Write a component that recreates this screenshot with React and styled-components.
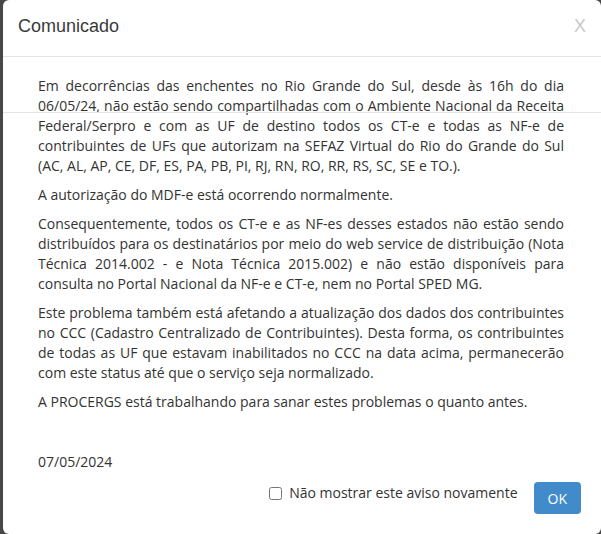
import React from "react";
import styled, { createGlobalStyle } from "styled-components";

const col_text = "#333";
const col_line = "#e5e5e5";
const col_primary = "#428bca";

const GlobalStyle = createGlobalStyle`
    html, body {
        margin: 0;
        padding: 0;
        background: #474747;
    }
    * {
        box-sizing: border-box;
    }
`;

const Backdrop = styled.div`
    display: flex;
    height: 534px;
    padding-left: 3px;
`;

const Dialog = styled.div`
    position: relative;
    display: flex;
    flex-direction: column;
    flex: 1;
    background: #fff;
    border-radius: 6px;
    overflow: hidden;
`;

const Header = styled.div`
    display: flex;
    align-items: center;
    justify-content: space-between;
    height: 57px;
    padding: 0 15px 3px 15px;
    border-bottom: 1px solid ${col_line};
`;

const Title = styled.h4`
    margin: 0;
    font-family: "Liberation Sans", Arial, sans-serif;
    font-weight: 400;
    font-size: 18px;
    color: #3a3a3a;
`;

const Close = styled.button`
    border: none;
    background: none;
    padding: 0;
    font-family: "Liberation Sans", Arial, sans-serif;
    font-size: 18px;
    color: #c9c9c9;
    cursor: pointer;
`;

const Rule = styled.div`
    position: absolute;
    top: 112px;
    left: 0;
    right: 0;
    height: 1px;
    background: ${col_line};
`;

const Body = styled.div`
    padding: 19px 37px 0 35px;
    font-family: "Open Sans", sans-serif;
    font-size: 14px;
    line-height: 20px;
    color: ${col_text};
`;

const Paragraph = styled.p`
    margin: 0 0 ${(p) => p.$gap ?? 9}px;
    margin-top: ${(p) => p.$top || 0}px;
    text-align: justify;
`;

const Footer = styled.div`
    display: flex;
    justify-content: flex-end;
    align-items: flex-start;
    gap: 16px;
    padding: 0 20px 0 0;
    margin-top: 0;
    font-family: "Open Sans", sans-serif;
    font-size: 14px;
    line-height: 20px;
    color: ${col_text};
`;

const CheckLabel = styled.label`
    display: flex;
    align-items: center;
    gap: 7px;
    margin-top: 1px;
    cursor: pointer;
`;

const Check = styled.input`
    width: 13px;
    height: 13px;
    margin: 0;
`;

const Button = styled.button`
    height: 32px;
    padding: 0 14px;
    border: none;
    border-radius: 4px;
    background: ${col_primary};
    color: #fff;
    font-family: "Open Sans", sans-serif;
    font-size: 14px;
    cursor: pointer;
`;

const paragraphs = [
    "Em decorrências das enchentes no Rio Grande do Sul, desde às 16h do dia 06/05/24, não estão sendo compartilhadas com o Ambiente Nacional da Receita Federal/Serpro e com as UF de destino todos os CT-e e todas as NF-e de contribuintes de UFs que autorizam na SEFAZ Virtual do Rio do Grande do Sul (AC, AL, AP, CE, DF, ES, PA, PB, PI, RJ, RN, RO, RR, RS, SC, SE e TO.).",
    "A autorização do MDF-e está ocorrendo normalmente.",
    "Consequentemente, todos os CT-e e as NF-es desses estados não estão sendo distribuídos para os destinatários por meio do web service de distribuição (Nota Técnica 2014.002 - e Nota Técnica 2015.002) e não estão disponíveis para consulta no Portal Nacional da NF-e e CT-e, nem no Portal SPED MG.",
    "Este problema também está afetando a atualização dos dados dos contribuintes no CCC (Cadastro Centralizado de Contribuintes). Desta forma, os contribuintes de todas as UF que estavam inabilitados no CCC na data acima, permanecerão com este status até que o serviço seja normalizado.",
    "A PROCERGS está trabalhando para sanar estes problemas o quanto antes.",
];

const App = () => {
    return (
        <>
            <GlobalStyle />
            <Backdrop>
                <Dialog>
                    <Header>
                        <Title>Comunicado</Title>
                        <Close>X</Close>
                    </Header>
                    <Rule />
                    <Body>
                        {paragraphs.map((text, i) => (
                            <Paragraph key={i}>{text}</Paragraph>
                        ))}
                        <Paragraph $top={40} $gap={10}>07/05/2024</Paragraph>
                    </Body>
                    <Footer>
                        <CheckLabel>
                            <Check type="checkbox" />
                            Não mostrar este aviso novamente
                        </CheckLabel>
                        <Button>OK</Button>
                    </Footer>
                </Dialog>
            </Backdrop>
        </>
    );
};

export default App;
